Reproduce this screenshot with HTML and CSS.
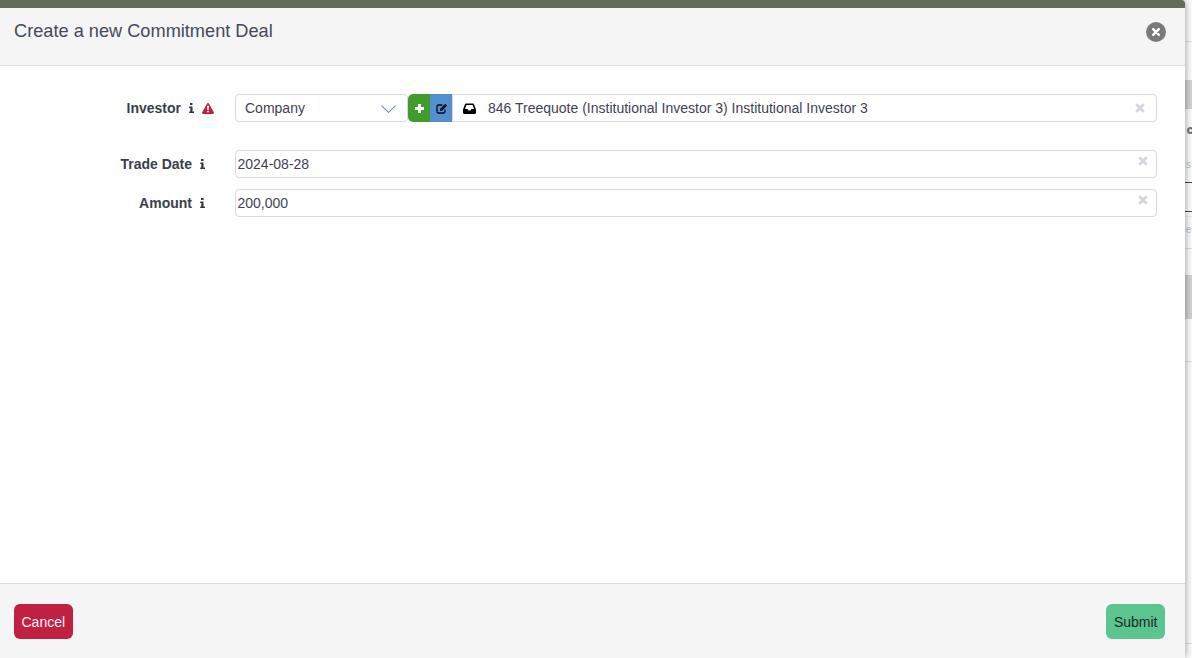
FILE: index.html
```html
<!DOCTYPE html>
<html lang="en">
<head>
<meta charset="utf-8">
<title>Create a new Commitment Deal</title>
<link rel="stylesheet" href="styles.css">
</head>
<body>
<div class="page">
  <main class="modal">
    <header class="modal-header">
      <h1 class="modal-title">Create a new Commitment Deal</h1>
      <button class="close" aria-label="Close">
        <svg viewBox="0 0 20 20" width="20" height="20"><circle cx="10" cy="10" r="10" fill="#7a7a7a"/><path d="M7.200 7.200l5.600 5.600M12.800 7.200l-5.600 5.600" stroke="#fff" stroke-width="2.400" stroke-linecap="round"/></svg>
      </button>
    </header>
    <section class="modal-body">
      <div class="row row-investor">
        <div class="label">
          <span class="label-text">Investor</span>
          <svg class="info" viewBox="0 0 5 10" width="5" height="10"><path d="M1 0h2.500v2H1zM.2 3.500h3.300v5H5V10H.2V8.500h1.100V5H.2z" fill="#33363f"/></svg>
          <svg class="warn" viewBox="0 0 12 11" width="12" height="11"><path d="M6 0c.4 0 .7.2.9.5l4.900 8.800c.4.700-.1 1.600-.9 1.600H1.100c-.8 0-1.300-.9-.9-1.600L5.100.5C5.300.2 5.600 0 6 0z" fill="#c02142"/><path d="M5 2.800h2l-.2 4H5.200zM5.100 7.700h1.800v1.500H5.100z" fill="#fff"/></svg>
        </div>
        <div class="investor-controls">
          <div class="select">
            <span>Company</span>
            <svg viewBox="0 0 15 8" width="15" height="8"><path d="M.5.700l7 6.600 7-6.600" fill="none" stroke="#7b83c4" stroke-width="1.100"/></svg>
          </div>
          <button class="add" aria-label="Add">
            <svg viewBox="0 0 9 9" width="9" height="9"><path d="M4.500 0v9M0 4.500h9" stroke="#fff" stroke-width="2.800"/></svg>
          </button>
          <button class="edit" aria-label="Edit">
            <svg viewBox="0 0 12 11" width="12" height="11"><path d="M9 6.500v2.100c0 .9-.6 1.400-1.400 1.400H2.400C1.500 10 1 9.500 1 8.600V3.400C1 2.500 1.500 2 2.400 2h4" fill="none" stroke="#050b18" stroke-width="1.300"/><path d="M4 6l.1 1.900L6 7.800l5.100-5.100-1.900-1.900z" fill="#050b18"/></svg>
          </button>
          <div class="lookup">
            <svg class="inbox" viewBox="0 0 13 11" width="13" height="11"><path d="M3 .5h7c.4 0 .7.2.9.600l1.800 4.600c.2.300.3.600.3 1v2.800c0 .8-.6 1.500-1.400 1.500H1.400C.6 11 0 10.300 0 9.500V6.700c0-.4.100-.7.300-1L2.100 1.100C2.300.7 2.600.5 3 .5zm.4 1.600L2 6h2.600l.8 1.500h2.200L8.400 6H11L9.600 2.100z" fill="#000"/></svg>
            <span>846 Treequote (Institutional Investor 3) Institutional Investor 3</span>
            <svg class="clear" viewBox="0 0 10 10" width="10" height="10"><path d="M1.300 1.300l7.400 7.400M8.700 1.300L1.300 8.700" stroke="#d5d6de" stroke-width="2.800"/></svg>
          </div>
        </div>
      </div>
      <div class="row row-trade">
        <div class="label">
          <span class="label-text">Trade Date</span>
          <svg class="info" viewBox="0 0 5 10" width="5" height="10"><path d="M1 0h2.500v2H1zM.2 3.500h3.300v5H5V10H.2V8.500h1.100V5H.2z" fill="#33363f"/></svg>
        </div>
        <div class="field">
          <span>2024-08-28</span>
          <svg class="clear" viewBox="0 0 10 10" width="10" height="10"><path d="M1.300 1.300l7.400 7.400M8.700 1.300L1.300 8.700" stroke="#d5d6de" stroke-width="2.800"/></svg>
        </div>
      </div>
      <div class="row row-amount">
        <div class="label">
          <span class="label-text">Amount</span>
          <svg class="info" viewBox="0 0 5 10" width="5" height="10"><path d="M1 0h2.500v2H1zM.2 3.500h3.300v5H5V10H.2V8.500h1.100V5H.2z" fill="#33363f"/></svg>
        </div>
        <div class="field">
          <span>200,000</span>
          <svg class="clear" viewBox="0 0 10 10" width="10" height="10"><path d="M1.300 1.300l7.400 7.400M8.700 1.300L1.300 8.700" stroke="#d5d6de" stroke-width="2.800"/></svg>
        </div>
      </div>
    </section>
    <footer class="modal-footer">
      <button class="btn btn-cancel">Cancel</button>
      <button class="btn btn-submit">Submit</button>
    </footer>
  </main>
  <aside class="behind" aria-hidden="true">
    <div class="behind-line l1"></div>
    <div class="behind-block b1"></div>
    <div class="behind-ring"></div>
    <span class="behind-text t1">s</span>
    <div class="behind-dash d1"></div>
    <div class="behind-dash d2"></div>
    <div class="behind-line l5"></div>
    <span class="behind-text t2">e</span>
    <div class="behind-line l2"></div>
    <div class="behind-block b2"></div>
    <div class="behind-line l3"></div>
    <div class="behind-line l4"></div>
  </aside>
</div>
</body>
</html>
```
FILE: styles.css
```css
* { box-sizing: border-box; }
html, body { margin: 0; height: 100%; overflow: hidden; }
body {
  font-family: "Liberation Sans", Arial, sans-serif;
  font-size: 14px;
  color: #3f4254;
  background: #fff;
}
.page { display: flex; height: 658px; width: 1192px; }
.modal {
  width: 1185px;
  flex: none;
  display: flex;
  flex-direction: column;
  background: #fff;
  border-top: 8px solid #646b58;
  border-top-right-radius: 4px;
  box-shadow: 0 0 8px rgba(0, 0, 0, .45);
  position: relative;
  z-index: 1;
}
.modal-header {
  height: 58px;
  flex: none;
  background: #f5f5f5;
  border-bottom: 1px solid #dedede;
  display: flex;
  justify-content: space-between;
  align-items: flex-start;
  padding: 12px 19px 0 14px;
}
.modal-title { margin: 0; font-size: 18.2px; line-height: 22px; font-weight: 400; color: #464958; }
.close { border: 0; padding: 0; background: none; width: 20px; height: 20px; margin-top: 2px; display: block; }
.close svg { display: block; }
.modal-body { flex: 1; padding: 28px 28px 0 0; display: flex; flex-direction: column; }
.row { display: flex; align-items: center; height: 28px; }
.row-investor { margin-bottom: 28px; }
.row-trade { margin-bottom: 11px; }
.label {
  width: 235px;
  flex: none;
  display: flex;
  align-items: center;
  justify-content: flex-end;
  padding-right: 30px;
  gap: 8px;
}
.row-investor .label { padding-right: 21px; }
.label-text { font-weight: 700; color: #3b3e4b; }
.info, .warn { flex: none; display: block; }
.investor-controls { flex: 1; display: flex; height: 28px; }
.select {
  width: 173px;
  height: 28px;
  border: 1px solid #d8d9e4;
  border-radius: 4px;
  display: flex;
  align-items: center;
  justify-content: space-between;
  padding: 0 11px 0 9px;
  color: #3f4254;
  background: #fff;
}
.select svg { margin-top: 2px; }
.add, .edit {
  border: 0;
  padding: 0;
  width: 22px;
  height: 28px;
  display: flex;
  align-items: center;
  justify-content: center;
}
.add { background: #429b2c; border-radius: 5px 0 0 5px; }
.edit { background: #5490cf; padding-left: 2px; }
.lookup {
  flex: 1;
  height: 28px;
  display: flex;
  align-items: center;
  border: 1px solid #d8d9e4;
  border-radius: 0 4px 4px 0;
  padding: 0 11px 0 10px;
  color: #3f4254;
}
.lookup span { margin-left: 12px; flex: 1; }
.clear { flex: none; display: block; }
.field {
  flex: 1;
  height: 28px;
  border: 1px solid #d8d9e4;
  border-radius: 4px;
  display: flex;
  align-items: center;
  justify-content: space-between;
  padding: 0 8.5px 0 1.5px;
  position: relative;
}
.field .clear { margin-bottom: 6px; }
.modal-footer {
  height: 75px;
  flex: none;
  background: #f5f5f5;
  border-top: 1px solid #dedede;
  display: flex;
  justify-content: space-between;
  align-items: flex-start;
  padding: 20px 20px 0 14px;
}
.btn {
  height: 35px;
  border: 0;
  border-radius: 6px;
  font-family: inherit;
  font-size: 14px;
  padding: 0 7.5px;
}
.btn-cancel { background: #c02142; color: #f7f2f3; }
.btn-submit { background: #5cc48e; color: #17291f; }
.behind { flex: 1; position: relative; background: #fff; overflow: hidden; }
.behind > div { position: absolute; left: 0; width: 100%; }
.behind-line { height: 1px; background: #e3e3e3; }
.l1 { top: 41px; }
.l2 { top: 248px; }
.l3 { top: 361px; }
.l4 { top: 643px; }
.l5 { top: 216px; background: #eee; }
.behind-block { background: #d6d6d6; }
.b1 { top: 80px; height: 29px; }
.b2 { top: 275px; height: 44px; }
.behind-ring { top: 127px; height: 7px; left: 2px !important; width: 7px !important; border: 2px solid #777; border-radius: 50%; }
.behind-dash { height: 1px; background: #444; }
.d1 { top: 182px; }
.d2 { top: 211px; }
.behind-text { position: absolute; left: 1px; font-size: 10px; line-height: 12px; color: #c4c4c4; white-space: nowrap; }
.t1 { top: 159px; }
.t2 { top: 224px; }
```
